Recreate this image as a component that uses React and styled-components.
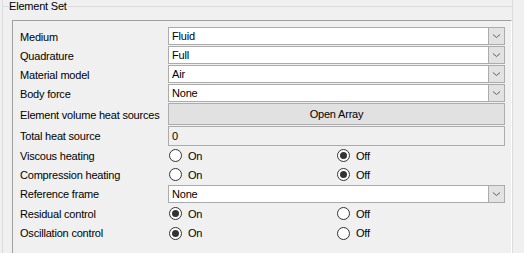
import React from "react";
import styled, { createGlobalStyle } from "styled-components";

const GlobalStyle = createGlobalStyle`
  html, body {
    margin: 0;
    padding: 0;
    background: #f0f0f0;
    overflow: hidden;
  }
  body {
    font-family: "Liberation Sans", Arial, sans-serif;
    font-size: 11px;
    letter-spacing: -0.2px;
    color: #000;
  }
`;

const Page = styled.div`
  width: 524px;
  height: 253px;
  padding: 0 11px 0 2px;
  box-sizing: border-box;
  overflow: hidden;
`;

const Group = styled.div`
  height: 300px;
  border-left: 1px solid #dcdcdc;
  border-right: 1px solid #dcdcdc;
  box-sizing: border-box;
`;

const GroupHeader = styled.div`
  display: flex;
  align-items: center;
  height: 13px;
  margin-left: -1px;
  margin-right: -1px;
`;

const HeaderLine = styled.div`
  height: 1px;
  background: #dcdcdc;
  width: ${(p) => (p.grow ? "auto" : "7px")};
  flex: ${(p) => (p.grow ? 1 : "none")};
`;

const Title = styled.span`
  padding: 0 1px 0 0;
  line-height: 13px;
  white-space: nowrap;
`;

const Panel = styled.div`
  margin: 7px 0 0 9px;
  border-top: 1px solid #a0a0a0;
  border-left: 1px solid #a0a0a0;
  border-right: 1px solid #ffffff;
  height: 280px;
  padding: 6px 5px 0 7px;
  display: flex;
  flex-direction: column;
`;

const Row = styled.div`
  display: grid;
  grid-template-columns: 148px 337px;
  height: ${(p) => p.h}px;
  align-items: ${(p) => (p.top ? "start" : "center")};
`;

const Label = styled.div`
  white-space: nowrap;
  align-self: center;
`;

const Combo = styled.div`
  height: 18px;
  margin-top: ${(p) => p.mt || 0}px;
  box-sizing: border-box;
  border: 1px solid #ababab;
  background: #fff;
  display: flex;
  align-items: stretch;
`;

const ComboText = styled.div`
  flex: 1;
  padding-left: 3px;
  line-height: 16px;
`;

const Arrow = styled.div`
  width: 15px;
  background: #e2e2e2;
  border-left: 1px solid #ababab;
  display: flex;
  align-items: center;
  justify-content: center;
`;

const Button = styled.div`
  height: 22px;
  box-sizing: border-box;
  border: 1px solid #adadad;
  background: #e1e1e1;
  display: flex;
  align-items: center;
  justify-content: center;
`;

const TextBox = styled.div`
  height: 20px;
  box-sizing: border-box;
  border: 1px solid #ababab;
  background: #f0f0f0;
  padding-left: 3px;
  line-height: 18px;
`;

const Radios = styled.div`
  display: grid;
  grid-template-columns: 168px 169px;
`;

const RadioItem = styled.div`
  display: flex;
  align-items: center;
  padding-left: 1px;
  gap: 6px;
`;

const Circle = styled.span`
  width: 13px;
  height: 13px;
  box-sizing: border-box;
  border: 1px solid #333;
  border-radius: 50%;
  background: #fff;
  display: flex;
  align-items: center;
  justify-content: center;
  &::after {
    content: "";
    display: ${(p) => (p.checked ? "block" : "none")};
    width: 7px;
    height: 7px;
    border-radius: 50%;
    background: #333;
  }
`;

const Chevron = () => (
  <svg width="9" height="6" viewBox="0 0 9 6">
    <path d="M1 1.5 L4.5 4.5 L8 1.5" fill="none" stroke="#606060" strokeWidth="1" />
  </svg>
);

const Select = ({ value, mt }) => (
  <Combo mt={mt}>
    <ComboText>{value}</ComboText>
    <Arrow>
      <Chevron />
    </Arrow>
  </Combo>
);

const Radio = ({ on }) => (
  <Radios>
    <RadioItem>
      <Circle checked={on} />
      On
    </RadioItem>
    <RadioItem>
      <Circle checked={!on} />
      Off
    </RadioItem>
  </Radios>
);

const rows = [
  { label: "Medium", h: 19, kind: "select", value: "Fluid" },
  { label: "Quadrature", h: 19, kind: "select", value: "Full" },
  { label: "Material model", h: 19, kind: "select", value: "Air" },
  { label: "Body force", h: 19, kind: "select", value: "None" },
  { label: "Element volume heat sources", h: 23, kind: "button", value: "Open Array" },
  { label: "Total heat source", h: 20, kind: "text", value: "0" },
  { label: "Viscous heating", h: 19, kind: "radio", on: false },
  { label: "Compression heating", h: 19, kind: "radio", on: false },
  { label: "Reference frame", h: 20, kind: "select", value: "None", mt: 1 },
  { label: "Residual control", h: 19, kind: "radio", on: true },
  { label: "Oscillation control", h: 20, kind: "radio", on: true },
];

const Control = ({ row }) => {
  if (row.kind === "select") return <Select value={row.value} mt={row.mt} />;
  if (row.kind === "button") return <Button>{row.value}</Button>;
  if (row.kind === "text") return <TextBox>{row.value}</TextBox>;
  return <Radio on={row.on} />;
};

export default function App() {
  return (
    <>
      <GlobalStyle />
      <Page>
        <Group>
          <GroupHeader>
            <HeaderLine />
            <Title>Element Set</Title>
            <HeaderLine grow />
          </GroupHeader>
          <Panel>
            {rows.map((row) => (
              <Row key={row.label} h={row.h} top={row.kind !== "radio"}>
                <Label>{row.label}</Label>
                <Control row={row} />
              </Row>
            ))}
          </Panel>
        </Group>
      </Page>
    </>
  );
}
